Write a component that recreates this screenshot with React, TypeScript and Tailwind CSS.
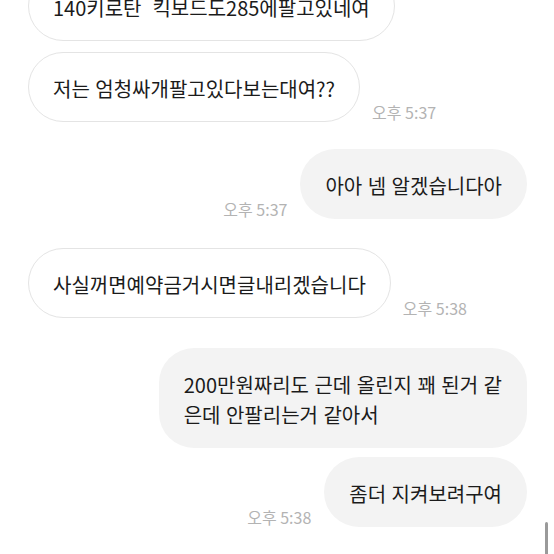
import React from "react";

const font = { fontFamily: '"Noto Sans CJK KR", "Noto Sans", sans-serif' };

function Left({ text, time, first }: { text: React.ReactNode; time?: string; first?: boolean }) {
  return (
    <div className={`flex items-end gap-[12px] pl-[28px] ${first ? "mt-[-29px]" : ""}`}>
      <div className="whitespace-pre rounded-[35px] border border-[#e4e4e4] bg-white px-[24px] pt-[21px] pb-[17px] text-[20px] leading-[30px] text-[#1b1b1b] [word-spacing:1px]">
        {text}
      </div>
      {time && <div className="mb-[1px] text-[16px] leading-[18px] text-[#b3b3b3]">{time}</div>}
    </div>
  );
}

function Right({ text, time }: { text: React.ReactNode; time?: string }) {
  return (
    <div className="flex items-end justify-end gap-[13px] pr-[27px]">
      {time && <div className="mb-[1px] text-[16px] leading-[18px] text-[#b3b3b3]">{time}</div>}
      <div className="whitespace-pre rounded-[35px] bg-[#f3f3f3] px-[25px] pt-[22px] pb-[18px] text-[20px] leading-[30px] text-[#1b1b1b] [word-spacing:1px]">
        {text}
      </div>
    </div>
  );
}

export default function App() {
  return (
    <div className="relative h-[554px] w-[554px] overflow-hidden bg-white" style={font}>
      <div className="flex flex-col">
        <Left first text="140키로탄  킥보드도285에팔고있네여" />
        <div className="h-[11px]" />
        <Left text="저는 엄청싸개팔고있다보는대여??" time="오후 5:37" />
        <div className="h-[27px]" />
        <Right text="아아 넴 알겠습니다아" time="오후 5:37" />
        <div className="h-[29px]" />
        <Left text="사실꺼면예약금거시면글내리겠습니다" time="오후 5:38" />
        <div className="h-[30px]" />
        <Right
          text={
            <>
              200만원짜리도 근데 올린지 꽤 된거 같<br />은데 안팔리는거 같아서
            </>
          }
        />
        <div className="h-[9px]" />
        <Right text="좀더 지켜보려구여" time="오후 5:38" />
      </div>
      <div className="absolute right-[6px] top-[522px] h-[40px] w-[3px] rounded-full bg-[#9a9a9a]" />
    </div>
  );
}
